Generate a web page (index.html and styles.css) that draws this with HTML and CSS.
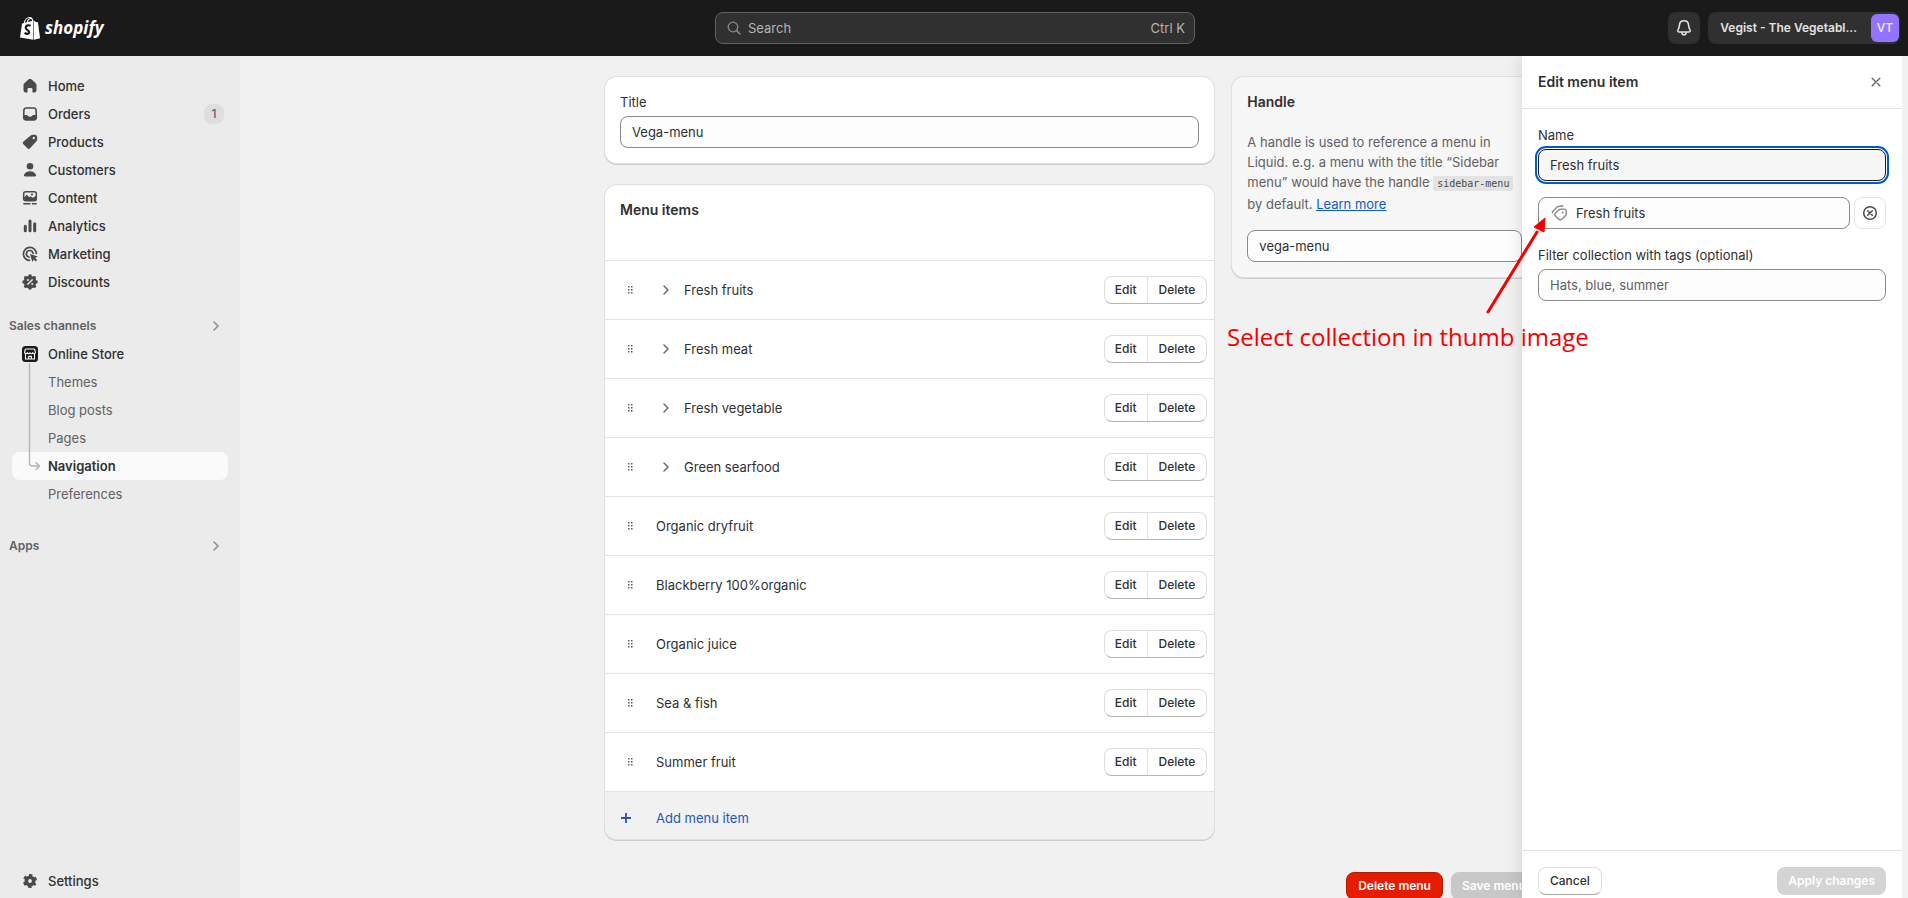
FILE: index.html
```html
<!DOCTYPE html>
<html lang="en">
<head>
<meta charset="utf-8">
<title>Vega-menu · Navigation · Shopify</title>
<link rel="stylesheet" href="styles.css">
</head>
<body>
<svg class="sprite" aria-hidden="true">
  <symbol id="chevron" viewBox="0 0 16 16"><path d="M6 4l4 4-4 4" fill="none" stroke="currentColor" stroke-width="1.5" stroke-linecap="round" stroke-linejoin="round"/></symbol>
  <symbol id="drag" viewBox="0 0 16 16"><g fill="currentColor"><rect x="6" y="4" width="1.500" height="1.500"/><rect x="9" y="4" width="1.500" height="1.500"/><rect x="6" y="7" width="1.500" height="1.500"/><rect x="9" y="7" width="1.500" height="1.500"/><rect x="6" y="10" width="1.500" height="1.500"/><rect x="9" y="10" width="1.500" height="1.500"/></g></symbol>
</svg>

<header class="topbar">
  <a class="brand" href="#" aria-label="Shopify home">
    <svg class="brand-bag" viewBox="0 0 22 25"><path d="M4.500 7C5 3.500 7.500 1 10 1c2.200 0 3.400 2.500 3.500 5M7.800 6.500C8 4 9.500 2 11.500 2c1 0 1.800 1 2 3" fill="none" stroke="#fff" stroke-width="1.200"/><path d="M2.200 7.300l11.800-3.300v20.400L0 21.800z" fill="#fff"/><path d="M14.600 4.100l1.900 1.600 2.300.3 2.200 16.600-6.400 1.600z" fill="#fff"/><path d="M11.200 9.600c-2-1-5-.6-5.200 1.900-.2 2.600 3.800 2.700 3.600 5.100-.2 2-2.600 2-4.800.5" fill="none" stroke="#1a1a1a" stroke-width="2.300"/></svg>
    <span class="brand-name">shopify</span>
  </a>
  <button class="search" type="button">
    <svg class="icon16" viewBox="0 0 16 16"><circle cx="7" cy="7" r="4.800" fill="none" stroke="currentColor" stroke-width="1.300"/><path d="M10.600 10.600L14 14" stroke="currentColor" stroke-width="1.500" stroke-linecap="round"/></svg>
    <span>Search</span><span class="shortcut">Ctrl K</span>
  </button>
  <div class="account">
    <button class="bell" type="button" aria-label="Notifications"><svg viewBox="0 0 20 20"><path d="M10 2.800c-2.900 0-4.500 2-4.600 4.600-.1 2-.4 2.800-1.300 4.200-.8 1.300-.4 2.300.9 2.300h10c1.300 0 1.700-1 .9-2.300-.9-1.400-1.200-2.200-1.300-4.200-.1-2.600-1.700-4.600-4.600-4.600zM7.800 14.200c0 1.600.9 2.600 2.200 2.600s2.200-1 2.200-2.600" fill="none" stroke="currentColor" stroke-width="1.500"/></svg></button>
    <button class="store" type="button"><span>Vegist - The Vegetabl...</span><span class="avatar">VT</span></button>
  </div>
</header>

<div class="shell">
  <nav class="sidebar" aria-label="Main">
    <div class="nav-group">
      <a class="nav-item" href="#"><svg viewBox="0 0 20 20"><path d="M8.700 3.200a2 2 0 0 1 2.600 0l4.200 3.900c.7.600 1 1.300 1 2.200v5a2.200 2.200 0 0 1-2.200 2.200h-1.800v-3.200a1.300 1.300 0 0 0-1.300-1.300H8.800a1.300 1.300 0 0 0-1.300 1.300v3.200H5.700a2.200 2.200 0 0 1-2.200-2.200v-5c0-.9.300-1.600 1-2.200z" fill="currentColor"/></svg>Home</a>
      <a class="nav-item" href="#"><svg viewBox="0 0 20 20"><path fill-rule="evenodd" d="M6.300 3.200h7.400c1.900 0 3.100 1.200 3.200 3.100l.2 6.900c.1 2.200-1.200 3.600-3.300 3.600H6.200c-2.100 0-3.400-1.400-3.300-3.600l.2-6.900c.1-1.900 1.300-3.100 3.200-3.100zM4.500 11h2.200c1 0 1.200 1.800 3.300 1.800s2.300-1.800 3.300-1.800h2.200l-.2-4.500c-.1-1.100-.7-1.700-1.700-1.700H6.400c-1 0-1.600.6-1.700 1.700z" fill="currentColor"/></svg>Orders<span class="badge">1</span></a>
      <a class="nav-item" href="#"><svg viewBox="0 0 20 20"><path fill-rule="evenodd" d="M10.700 3.500c.7-.6 1.400-.8 2.300-.8l2 .1c1.200.1 2 .9 2.100 2.100l.1 2c0 .9-.2 1.600-.8 2.300l-6.300 7c-.8.900-1.900.9-2.700.1l-4-4c-.8-.8-.8-1.900.1-2.700zM13.800 7.200a1.200 1.200 0 1 0 0-2.400 1.200 1.200 0 0 0 0 2.400z" fill="currentColor"/></svg>Products</a>
      <a class="nav-item" href="#"><svg viewBox="0 0 20 20"><circle cx="10" cy="6.200" r="3.300" fill="currentColor"/><path d="M10 11.200c3 0 5.200 1.500 6 3.600.4 1-.4 1.700-1.400 1.700H5.400c-1 0-1.800-.7-1.400-1.700.8-2.100 3-3.600 6-3.600z" fill="currentColor"/></svg>Customers</a>
      <a class="nav-item" href="#"><svg viewBox="0 0 20 20"><rect x="3.700" y="3.700" width="12.600" height="9" rx="2" fill="none" stroke="currentColor" stroke-width="1.500"/><path d="M3.700 10l3-3.200 2.700 2.400 1.400-1 1.800 1.600 3.700-1.800v3.200l-1.600 1.500H5.200z" fill="currentColor"/><circle cx="12" cy="6.500" r="1.100" fill="currentColor"/><path d="M3.800 15.800h6M12.400 15.800h3.800" stroke="currentColor" stroke-width="1.500" stroke-linecap="round"/></svg>Content</a>
      <a class="nav-item" href="#"><svg viewBox="0 0 20 20"><path d="M5.300 10.200v4.600M10 5v9.800M14.700 7.800v7" stroke="currentColor" stroke-width="3" stroke-linecap="round"/></svg>Analytics</a>
      <a class="nav-item" href="#"><svg viewBox="0 0 20 20"><path d="M16.400 9.500A6.500 6.500 0 1 0 9.500 16.400M13 9.500A3.300 3.300 0 1 0 9 13" fill="none" stroke="currentColor" stroke-width="1.700" stroke-linecap="round"/><path d="M10 10l7.800 2.600-2.700 1.500 2 2-1.300 1.300-2-2-1.400 2.600z" fill="currentColor"/></svg>Marketing</a>
      <a class="nav-item" href="#"><svg viewBox="0 0 20 20"><path d="M10 3.700a6.300 6.300 0 1 0 0 12.600 6.300 6.300 0 0 0 0-12.600z" fill="currentColor"/><g fill="currentColor"><circle cx="10" cy="4" r="1.800"/><circle cx="14.300" cy="5.700" r="1.800"/><circle cx="16" cy="10" r="1.800"/><circle cx="14.300" cy="14.300" r="1.800"/><circle cx="10" cy="16" r="1.800"/><circle cx="5.700" cy="14.300" r="1.800"/><circle cx="4" cy="10" r="1.800"/><circle cx="5.700" cy="5.700" r="1.800"/></g><path d="M7.800 12.200l4.400-4.400" stroke="#ebebeb" stroke-width="1.400" stroke-linecap="round"/><circle cx="7.800" cy="8" r="1" fill="#ebebeb"/><circle cx="12.200" cy="12" r="1" fill="#ebebeb"/></svg>Discounts</a>
    </div>
    <div class="nav-group">
      <button class="nav-heading" type="button">Sales channels<svg><use href="#chevron"/></svg></button>
      <a class="nav-item" href="#"><svg viewBox="0 0 20 20"><rect x="2" y="2" width="16" height="16" rx="3.500" fill="#1a1a1a"/><path d="M5.600 5h8.800M5.400 5L4.600 8.200c0 2 2.500 2 2.700 0 0 2 2.700 2 2.700 0 0 2 2.700 2 2.700 0 .2 2 2.700 2 2.700 0L14.600 5M5.500 10v5h9v-5M8.700 15v-2.600h2.600V15" fill="none" stroke="#fff" stroke-width="1.100"/></svg>Online Store</a>
      <div class="subnav">
        <svg class="branch" viewBox="0 0 14 112"><path d="M2.500 2v99q0 3 3 3H12M9 100.500l3.500 3.500-3.500 3.500" fill="none" stroke="currentColor" stroke-width="1.400" stroke-linecap="round" stroke-linejoin="round"/></svg>
        <a class="sub-item" href="#">Themes</a>
        <a class="sub-item" href="#">Blog posts</a>
        <a class="sub-item" href="#">Pages</a>
        <a class="sub-item current" href="#" aria-current="page">Navigation</a>
        <a class="sub-item" href="#">Preferences</a>
      </div>
    </div>
    <div class="nav-group nav-apps">
      <button class="nav-heading" type="button">Apps<svg><use href="#chevron"/></svg></button>
    </div>
    <div class="nav-group nav-bottom">
      <a class="nav-item" href="#"><svg viewBox="0 0 20 20"><circle cx="10" cy="10" r="3.700" fill="none" stroke="currentColor" stroke-width="3.600"/><circle cx="10" cy="10" r="5.700" fill="none" stroke="currentColor" stroke-width="2.600" stroke-dasharray="3.200 2.769" stroke-dashoffset="1.600" transform="rotate(30 10 10)"/></svg>Settings</a>
    </div>
  </nav>

  <main class="page">
    <div class="columns">
      <div class="primary">
        <section class="card">
          <label for="menu-title">Title</label>
          <input class="field" id="menu-title" type="text" value="Vega-menu">
        </section>
        <section class="card items-card">
          <h2>Menu items</h2>
          <ul class="items">
            <li><svg class="drag"><use href="#drag"/></svg><svg class="expand"><use href="#chevron"/></svg><span>Fresh fruits</span><div class="pair"><button type="button">Edit</button><button type="button">Delete</button></div></li>
            <li><svg class="drag"><use href="#drag"/></svg><svg class="expand"><use href="#chevron"/></svg><span>Fresh meat</span><div class="pair"><button type="button">Edit</button><button type="button">Delete</button></div></li>
            <li><svg class="drag"><use href="#drag"/></svg><svg class="expand"><use href="#chevron"/></svg><span>Fresh vegetable</span><div class="pair"><button type="button">Edit</button><button type="button">Delete</button></div></li>
            <li><svg class="drag"><use href="#drag"/></svg><svg class="expand"><use href="#chevron"/></svg><span>Green searfood</span><div class="pair"><button type="button">Edit</button><button type="button">Delete</button></div></li>
            <li><svg class="drag"><use href="#drag"/></svg><span>Organic dryfruit</span><div class="pair"><button type="button">Edit</button><button type="button">Delete</button></div></li>
            <li><svg class="drag"><use href="#drag"/></svg><span>Blackberry 100%organic</span><div class="pair"><button type="button">Edit</button><button type="button">Delete</button></div></li>
            <li><svg class="drag"><use href="#drag"/></svg><span>Organic juice</span><div class="pair"><button type="button">Edit</button><button type="button">Delete</button></div></li>
            <li><svg class="drag"><use href="#drag"/></svg><span>Sea &amp; fish</span><div class="pair"><button type="button">Edit</button><button type="button">Delete</button></div></li>
            <li><svg class="drag"><use href="#drag"/></svg><span>Summer fruit</span><div class="pair"><button type="button">Edit</button><button type="button">Delete</button></div></li>
          </ul>
          <button class="add-item" type="button"><svg viewBox="0 0 12 12"><path d="M6 1v10M1 6h10" stroke="currentColor" stroke-width="1.800"/></svg>Add menu item</button>
        </section>
      </div>
      <section class="card handle-card">
        <h2>Handle</h2>
        <p>A handle is used to reference a menu in Liquid. e.g. a menu with the title “Sidebar menu” would have the handle <code>sidebar-menu</code> by default. <a href="#">Learn more</a></p>
        <input class="field" type="text" value="vega-menu" aria-label="Handle">
      </section>
    </div>
    <div class="page-actions">
      <button class="button danger" type="button">Delete menu</button>
      <button class="button muted" type="button">Save menu</button>
    </div>
  </main>
</div>

<aside class="panel" aria-label="Edit menu item">
  <header class="panel-head">
    <h2>Edit menu item</h2>
    <button class="close" type="button" aria-label="Close"><svg viewBox="0 0 10 10"><path d="M1.200 1.200l7.600 7.600M8.800 1.200L1.200 8.800" stroke="currentColor" stroke-width="1.400" stroke-linecap="round"/></svg></button>
  </header>
  <div class="panel-body">
    <label for="item-name">Name</label>
    <input class="field active" id="item-name" type="text" value="Fresh fruits">
    <div class="link-row">
      <div class="field link-field">
        <svg viewBox="0 0 20 20"><path d="M10.500 6.300l3.100-.2c1.700-.1 2.800 1 2.700 2.600l-.2 2.400c-.1.800-.4 1.400-1 2l-3.300 3.200c-.9.900-2.100.9-3 0L5.500 13c-.9-.9-.9-2.100 0-3l3-2.900c.6-.5 1.200-.8 2-.8z" fill="none" stroke="currentColor" stroke-width="1.400"/><circle cx="12.700" cy="9.500" r="1" fill="currentColor"/><path d="M2.400 9.800c0-.7.300-1.200.8-1.700l4-4c.6-.6 1.200-.9 2-.9l3.800-.2" fill="none" stroke="currentColor" stroke-width="1.400" stroke-linecap="round"/></svg>
        <input type="text" value="Fresh fruits" aria-label="Link">
      </div>
      <button class="clear" type="button" aria-label="Clear link"><svg viewBox="0 0 16 16"><circle cx="8" cy="8" r="6.300" fill="none" stroke="currentColor" stroke-width="1.500"/><path d="M5.700 5.700l4.600 4.600M10.300 5.700l-4.600 4.600" stroke="currentColor" stroke-width="1.500" stroke-linecap="round"/></svg></button>
    </div>
    <label for="item-tags">Filter collection with tags (optional)</label>
    <input class="field" id="item-tags" type="text" placeholder="Hats, blue, summer">
  </div>
  <footer class="panel-foot">
    <button class="button plain" type="button">Cancel</button>
    <button class="button muted" type="button">Apply changes</button>
  </footer>
  <div class="note">
    <svg viewBox="0 0 60 100"><path d="M2 98L51 18" stroke="#f50000" stroke-width="3" stroke-linecap="round"/><path d="M59 4L48 13l10 5z" fill="#f50000" stroke="#f50000" stroke-width="1"/></svg>
    <p>Select collection in thumb image</p>
  </div>
</aside>
</body>
</html>
```
FILE: styles.css
```css
* { box-sizing: border-box; }
body {
  margin: 0;
  height: 100vh;
  overflow: hidden;
  display: flex;
  flex-direction: column;
  background: #f1f1f1;
  color: #303030;
  font: 400 13px/20px Inter, "Liberation Sans", sans-serif;
}
button, input { font: inherit; color: inherit; margin: 0; }
button { cursor: pointer; border: 0; padding: 0; background: none; }
h2, p, ul { margin: 0; padding: 0; }
h2 { font-size: 14px; font-weight: 600; line-height: 20px; }
label { display: block; margin-bottom: 4px; }
a { color: inherit; text-decoration: none; }
.sprite { position: absolute; width: 0; height: 0; }

.topbar {
  flex: none;
  height: 56px;
  display: grid;
  grid-template-columns: 1fr 480px 1fr;
  align-items: center;
  padding: 0 8px 0 10px;
  background: #1a1a1a;
  color: #e3e3e3;
}
.brand { display: flex; align-items: center; gap: 4px; padding-left: 10px; color: #fff; }
.brand-bag { width: 21px; height: 25px; }
.brand-name { font: italic 700 17px/24px "Open Sans", sans-serif; }
.search {
  height: 32px;
  display: flex;
  align-items: center;
  gap: 6px;
  padding: 0 9px 0 10px;
  background: #303030;
  border: 1px solid #616161;
  border-radius: 8px;
  color: #b5b5b5;
}
.icon16 { width: 16px; height: 16px; color: #8a8a8a; }
.shortcut { margin-left: auto; }
.account { display: flex; justify-content: flex-end; gap: 8px; }
.bell, .store { height: 32px; display: flex; align-items: center; background: #303030; border-radius: 8px; }
.bell { width: 32px; justify-content: center; }
.bell svg { width: 20px; height: 20px; }
.store { padding: 0 1px 0 12px; gap: 14px; font-size: 12px; font-weight: 600; }
.avatar { width: 28px; height: 28px; border-radius: 6px; background: #9474ff; color: #f3eeff; line-height: 28px; text-align: center; font-weight: 500; }

.shell { flex: 1; min-height: 0; display: flex; padding-right: 6px; }
.sidebar { width: 240px; flex: none; display: flex; flex-direction: column; gap: 16px; padding: 16px 12px 3px; background: #ebebeb; }
.nav-item { display: flex; align-items: center; gap: 8px; height: 28px; padding: 0 4px 0 8px; font-weight: 500; }
.nav-item svg { width: 20px; height: 20px; color: #4a4a4a; }
.badge { margin-left: auto; min-width: 20px; height: 20px; border-radius: 8px; background: #dedede; color: #616161; text-align: center; font-size: 12px; }
.nav-heading { display: flex; align-items: center; justify-content: space-between; width: calc(100% + 3px); height: 28px; margin-left: -3px; padding: 0 4px 0 0; font-weight: 600; font-size: 12px; color: #616161; }
.nav-heading svg { width: 16px; height: 16px; color: #8a8a8a; }
.subnav { position: relative; }
.sub-item { display: block; height: 28px; padding-left: 36px; line-height: 28px; color: #616161; border-radius: 8px; }
.sub-item.current { background: #fafafa; color: #303030; font-weight: 600; }
.branch { position: absolute; left: 15px; top: -6px; width: 14px; height: 112px; color: #b5b5b5; }
.nav-apps { padding-top: 8px; }
.nav-bottom { margin-top: auto; }

.page { flex: 1; min-width: 0; display: flex; flex-direction: column; gap: 33px; padding: 21px 365px 0; }
.columns { display: grid; grid-template-columns: 2fr 1fr; gap: 18px; align-items: start; }
.primary { display: grid; gap: 22px; }
.card { background: #fff; border-radius: 12px; box-shadow: 0 0 0 1px #e0e0e0, 0 1px 0 1px #cccccc; padding: 15px; }
.field {
  display: block;
  width: 100%;
  height: 32px;
  padding: 0 11px;
  background: #fdfdfd;
  border: 1px solid #8a8a8a;
  border-radius: 8px;
  outline: none;
}
.field::placeholder { color: #616161; opacity: 1; }
.items-card { padding: 0; overflow: hidden; }
.items-card h2 { padding: 15px 15px 40px; }
.items { list-style: none; }
.items li { display: flex; align-items: center; height: 59px; padding: 0 7px 0 17px; border-top: 1px solid #e3e3e3; }
.drag { width: 16px; height: 16px; margin-right: 18px; color: #5a5a5a; }
.expand { width: 16px; height: 16px; margin: 0 10px 0 2px; color: #6a6a6a; }
.pair { margin-left: auto; display: flex; border: 1px solid #dedede; border-bottom-color: #b5b5b5; border-radius: 8px; font-size: 12px; font-weight: 500; }
.pair button { height: 26px; padding: 0 10px; }
.pair button + button { border-left: 1px solid #e3e3e3; padding: 0 11px; }
.add-item { display: flex; align-items: center; gap: 24px; width: 100%; height: 48px; padding: 5px 15px 0; border-top: 1px solid #e3e3e3; background: #f1f1f1; color: #1f58bd; }
.add-item svg { width: 12px; height: 12px; }
.handle-card { background: #f7f7f7; }
.handle-card p { margin: 20px 0 16px; color: #616161; }
.handle-card a { color: #0f5cc5; text-decoration: underline; }
.handle-card code { padding: 2px 4px; border-radius: 2px; background: #e3e3e3; font: 400 10px/20px "DejaVu Sans Mono", monospace; color: #4a4a4a; white-space: nowrap; }
.page-actions { display: flex; justify-content: flex-end; gap: 8px; }
.button { height: 28px; padding: 0 11px; border-radius: 8px; font-size: 12px; font-weight: 600; white-space: nowrap; }
.danger { background: #e51c00; color: #fff; border: 1px solid #b51a00; }
.muted { background: #d4d4d4; color: #fff; }
.page-actions .muted { background: #c8c8c8; }
.plain { border: 1px solid #dedede; border-bottom-color: #a8a8a8; font-weight: 500; background: #fff; }

.panel {
  position: absolute;
  top: 56px;
  right: 6px;
  bottom: 0;
  width: 380px;
  display: flex;
  flex-direction: column;
  background: #fff;
  box-shadow: 0 0 16px #00000024;
  clip-path: inset(0 0 0 -320px);
}
.panel-head { display: flex; align-items: center; justify-content: space-between; height: 53px; padding: 0 16px; border-bottom: 1px solid #e3e3e3; }
.close { width: 20px; height: 20px; display: grid; place-items: center; color: #6a6a6a; }
.close svg { width: 10px; height: 10px; }
.panel-body { flex: 1; padding: 16px; }
.field.active { background: #f7f7f7; border-color: #1a1a1a; outline: 2px solid #005bd3; outline-offset: 1px; }
.link-row { display: flex; gap: 4px; margin: 16px 0; }
.link-field { flex: 1; display: flex; align-items: center; gap: 6px; }
.link-field svg { width: 20px; height: 20px; color: #8a8a8a; }
.link-field input { flex: 1; min-width: 0; border: 0; padding: 0; background: none; outline: none; }
.clear { width: 32px; height: 32px; display: grid; place-items: center; border: 1px solid #e3e3e3; border-radius: 8px; color: #4a4a4a; }
.clear svg { width: 16px; height: 16px; }
.panel-foot { display: flex; justify-content: space-between; padding: 16px 16px 3px; border-top: 1px solid #e3e3e3; }
.note { position: absolute; left: -295px; top: 158px; width: 380px; pointer-events: none; color: #f50000; }
.note svg { display: block; width: 60px; height: 100px; margin-left: 259px; }
.note p { font: 400 24px/36px "Open Sans", sans-serif; white-space: nowrap; margin-top: 5px; }
```
